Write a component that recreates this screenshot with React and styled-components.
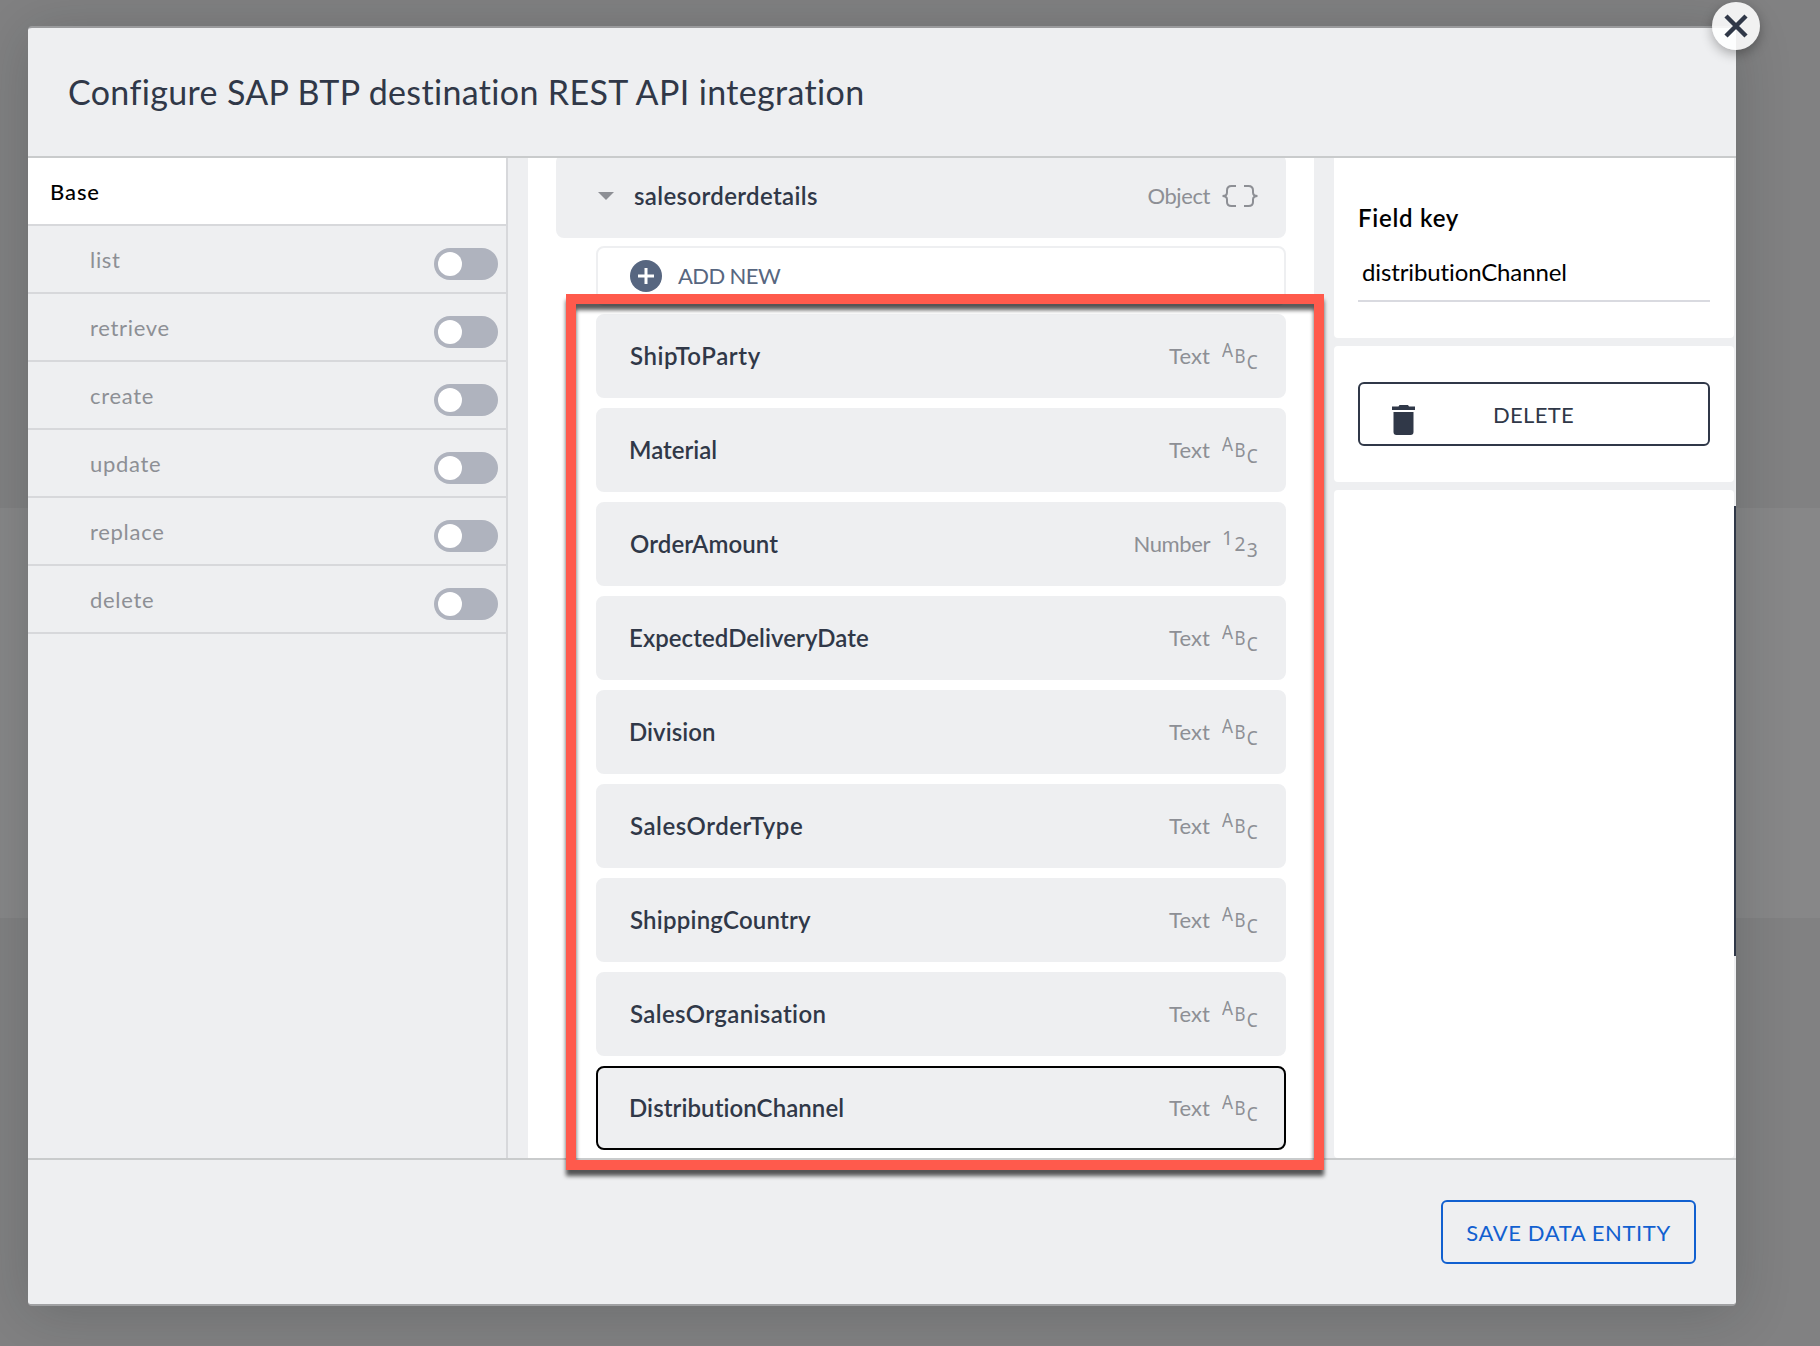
import React from "react";
import styled, { createGlobalStyle } from "styled-components";

const ink = "#303848";
const panel = "#eeeff1";
const muted = "#8d8f95";

const GlobalStyle = createGlobalStyle`
  *, *::before, *::after { box-sizing: border-box; }
  body { margin: 0; overflow: hidden; }
  button, input { font-family: inherit; }
`;

const Backdrop = styled.div`
  height: 1346px;
  padding: 26px 84px 40px 28px;
  background: linear-gradient(#818182 508px, #878788 508px, #878788 918px, #818182 918px);
  font-family: "Lato", "Liberation Sans", sans-serif;
  color: ${ink};
`;

const Dialog = styled.div`
  position: relative;
  display: flex;
  flex-direction: column;
  height: 1280px;
  background: ${panel};
  border-top: 2px solid #9a9b9d;
  border-bottom: 2px solid #a0a1a3;
  border-radius: 4px;
  box-shadow: 0 6px 56px rgba(20, 28, 32, 0.2);
`;

const Header = styled.header`
  flex: 0 0 130px;
  display: flex;
  align-items: center;
  padding: 0 40px 2px;
  border-bottom: 2px solid #c9cbcc;
`;

const Title = styled.h1`
  margin: 0;
  font-size: 34px;
  font-weight: 400;
  letter-spacing: 0.35px;
`;

const CloseButton = styled.button`
  position: absolute;
  top: -26px;
  right: -24px;
  display: grid;
  place-items: center;
  width: 48px;
  height: 48px;
  padding: 0;
  border: 0;
  border-radius: 50%;
  background: rgba(255, 255, 255, 0.89);
  box-shadow: 0 4px 12px rgba(0, 0, 0, 0.3);
`;

const Body = styled.main`
  flex: 0 0 1000px;
  display: grid;
  grid-template-columns: 480px 786px 400px;
  column-gap: 20px;
  overflow: hidden;
`;

const Sidebar = styled.nav`
  border-right: 2px solid #d7d8db;
`;

const SideItem = styled.div`
  display: flex;
  align-items: center;
  height: 68px;
  padding: 0 8px 0 ${(p) => (p.$active ? 22 : 62)}px;
  border-bottom: 2px solid #d7d8db;
  background: ${(p) => (p.$active ? "#fff" : "transparent")};
  color: ${(p) => (p.$active ? "#000" : muted)};
  font-size: 22px;
  font-weight: ${(p) => (p.$active ? 500 : 400)};
  letter-spacing: ${(p) => (p.$active ? 0.9 : 0.7)}px;
`;

const Toggle = styled.span`
  width: 64px;
  height: 32px;
  margin: 10px 0 0 auto;
  padding: 4px;
  border-radius: 16px;
  background: #afb3be;

  &::before {
    content: "";
    display: block;
    width: 24px;
    height: 24px;
    border-radius: 50%;
    background: #fff;
  }
`;

const Entities = styled.section`
  display: flex;
  flex-direction: column;
  background: #fff;
  padding: 0 28px;
  margin-top: -4px;
`;

const Row = styled.div`
  flex: none;
  display: flex;
  align-items: center;
  height: 84px;
  padding: 0 26px 1px ${(p) => (p.$parent ? 40 : 32)}px;
  border: 2px solid ${(p) => (p.$selected ? "#000" : panel)};
  border-radius: 8px;
  background: ${panel};
`;

const Children = styled.div`
  display: flex;
  flex-direction: column;
  gap: 10px;
  padding: 8px 0 0 40px;
`;

const AddNew = styled.button`
  display: flex;
  align-items: center;
  gap: 16px;
  height: 60px;
  margin-bottom: -2px;
  padding: 0 32px;
  border: 2px solid ${panel};
  border-radius: 8px;
  background: #fff;
  color: #576680;
  font-size: 22px;
  letter-spacing: -0.6px;
  line-height: 26px;
`;

const Name = styled.span`
  margin-left: ${(p) => p.$shift || 0}px;
  font-size: 24px;
  font-weight: 600;
  letter-spacing: ${(p) => p.$tracking}px;
`;

const Kind = styled.span`
  display: flex;
  align-items: center;
  gap: 12px;
  margin-left: auto;
  color: ${muted};
  font-size: 22px;
  letter-spacing: ${(p) => (p.$wide ? 0.1 : -0.4)}px;
`;

const Caret = styled.span`
  width: 0;
  height: 0;
  margin: 0 20px 0 0;
  border: 8px solid transparent;
  border-top-color: ${muted};
  border-bottom: 0;
`;

const Inspector = styled.aside`
  display: flex;
  flex-direction: column;
  gap: 8px;
`;

const Card = styled.section`
  flex: ${(p) => (p.$height ? `0 0 ${p.$height}px` : 1)};
  padding: ${(p) => p.$top || 0}px 24px 0;
  border-radius: ${(p) => (p.$height === 180 ? "0 0 4px 4px" : "4px")};
  background: #fff;
  color: #000;
`;

const FieldLabel = styled.label`
  display: block;
  font-size: 24px;
  font-weight: 600;
  line-height: 28px;
  letter-spacing: 0.75px;
`;

const FieldInput = styled.input`
  display: block;
  width: 100%;
  height: 45px;
  margin-top: 25px;
  padding: 0 4px 15px;
  border: 0;
  border-bottom: 2px solid #d9dae0;
  background: none;
  color: #000;
  font-size: 24px;
  line-height: 28px;
  letter-spacing: -0.12px;
`;

const OutlineButton = styled.button`
  display: flex;
  align-items: center;
  justify-content: center;
  width: ${(p) => p.$width};
  height: 64px;
  padding: 0;
  border: 2px solid currentColor;
  border-radius: 6px;
  background: transparent;
  color: ${(p) => p.$color};
  font-size: 22px;
  letter-spacing: 0.6px;
`;

const DeleteButton = styled(OutlineButton)`
  display: grid;
  grid-template-columns: 22px 1fr 22px;
  padding: 0 33px 0 32px;
  letter-spacing: 0.3px;

  svg { margin-top: 12px; }
`;

const Footer = styled.footer`
  flex: 1;
  display: flex;
  justify-content: flex-end;
  padding: 40px 40px 0;
  border-top: 2px solid #c9cbcc;
`;

const ScrollThumb = styled.div`
  position: absolute;
  top: 478px;
  right: 0;
  width: 2px;
  height: 450px;
  background: ${ink};
`;

const Highlight = styled.div`
  position: absolute;
  top: 266px;
  left: 538px;
  width: 758px;
  height: 876px;
  border: 10px solid #ff5a4c;
  filter: drop-shadow(0 6px 2px rgba(0, 0, 0, 0.65));
  pointer-events: none;
`;

const GLYPHS = { Text: ["A", "B", "C"], Number: ["1", "2", "3"] };

function KindIcon({ kind }) {
  if (kind === "Object") {
    return (
      <svg width="36" height="24" viewBox="0 0 36 24" fill="none" stroke={muted} strokeWidth="2">
        <path d="M14 2H9.500Q5 2 5 6.500V8.500Q5 12 .5 12Q5 12 5 15.500V18Q5 22 9.500 22H14" />
        <path d="M22 2H26.500Q31 2 31 6.500V8.500Q31 12 35.500 12Q31 12 31 15.500V18Q31 22 26.500 22H22" />
      </svg>
    );
  }
  return (
    <svg width="36" height="48" viewBox="0 -10 36 48" fill={muted} fontFamily="Noto Sans, sans-serif" fontSize="19.5" fontWeight="400" letterSpacing="0">
      {GLYPHS[kind].map((g, i) => (
        <text key={g} x={i * 12.4} y={15 + i * 6} textLength="11" lengthAdjust="spacingAndGlyphs">{g}</text>
      ))}
    </svg>
  );
}

const ACTIONS = ["list", "retrieve", "create", "update", "replace", "delete"];

const FIELDS = [
  { name: "ShipToParty", tracking: 0.6 },
  { name: "Material", tracking: 0, shift: -1 },
  { name: "OrderAmount", tracking: 0.1 },
  { name: "ExpectedDeliveryDate", tracking: 0.06, shift: -1 },
  { name: "Division", tracking: 0.05, shift: -1 },
  { name: "SalesOrderType", tracking: 0.55 },
  { name: "ShippingCountry", tracking: 0.22 },
  { name: "SalesOrganisation", tracking: 0.38 },
  { name: "DistributionChannel", tracking: 0.08, shift: -1, selected: true },
].map((f) => ({ kind: f.name === "OrderAmount" ? "Number" : "Text", ...f }));

export default function App() {
  return (
    <Backdrop>
      <GlobalStyle />
      <Dialog role="dialog">
        <Header>
          <Title>Configure SAP BTP destination REST API integration</Title>
        </Header>
        <Body>
          <Sidebar>
            <SideItem $active>Base</SideItem>
            {ACTIONS.map((a) => (
              <SideItem key={a}>
                {a}
                <Toggle />
              </SideItem>
            ))}
          </Sidebar>
          <Entities>
            <Row $parent>
              <Caret />
              <Name $tracking={0.36}>salesorderdetails</Name>
              <Kind>Object<KindIcon kind="Object" /></Kind>
            </Row>
            <Children>
              <AddNew>
                <svg width="32" height="32" viewBox="0 0 32 32">
                  <circle cx="16" cy="16" r="16" fill="#576680" />
                  <path d="M16 8V24M8 16H24" stroke="#fff" strokeWidth="3" />
                </svg>
                <span>ADD NEW</span>
              </AddNew>
              {FIELDS.map((f) => (
                <Row key={f.name} $selected={f.selected}>
                  <Name $tracking={f.tracking} $shift={f.shift}>{f.name}</Name>
                  <Kind $wide={f.kind === "Text"}>{f.kind}<KindIcon kind={f.kind} /></Kind>
                </Row>
              ))}
            </Children>
          </Entities>
          <Inspector>
            <Card $height={180} $top={46}>
              <FieldLabel htmlFor="field-key">Field key</FieldLabel>
              <FieldInput id="field-key" defaultValue="distributionChannel" />
            </Card>
            <Card $height={136} $top={36}>
              <DeleteButton $width="100%" $color={ink}>
                <svg width="24" height="30" viewBox="0 0 24 30" fill={ink}>
                  <path d="M6.500 1.500L7.500 0H16L17 1.500H23V5H0V1.500ZM1.500 7H21.500V27Q21.500 30 18.500 30H4.500Q1.500 30 1.500 27Z" />
                </svg>
                <span>DELETE</span>
              </DeleteButton>
            </Card>
            <Card />
          </Inspector>
        </Body>
        <Footer>
          <OutlineButton $width="255px" $color="#1160d0">SAVE DATA ENTITY</OutlineButton>
        </Footer>
        <ScrollThumb />
        <Highlight />
        <CloseButton aria-label="Close">
          <svg width="24" height="24" viewBox="0 0 24 24" stroke={ink} strokeWidth="4.500">
            <path d="M2 2L22 22M22 2L2 22" />
          </svg>
        </CloseButton>
      </Dialog>
    </Backdrop>
  );
}
